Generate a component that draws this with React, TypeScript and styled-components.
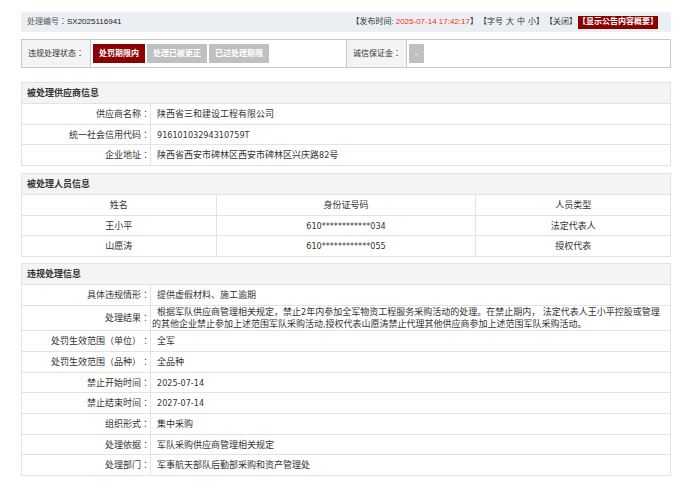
import React from "react";
import styled, { createGlobalStyle } from "styled-components";

const GlobalStyle = createGlobalStyle`
  * { box-sizing: border-box; }
  body {
    margin: 0;
    background: #fff;
    color: #333;
    font-family: "DejaVu Sans Condensed", "Noto Sans CJK SC", sans-serif;
    font-size: 9px;
    line-height: 12px;
    text-spacing-trim: space-all;
  }
`;

const Page = styled.main`
  padding: 12px 29px 10px 21px;
`;

const TopBar = styled.header`
  display: flex;
  align-items: center;
  justify-content: space-between;
  height: 20px;
  padding: 0 13px 0 6px;
  background: #ebeff3;
  color: #555;
  font-family: "Liberation Sans", "Noto Sans CJK SC", sans-serif;
  font-size: 8px;
  white-space: nowrap;
`;

const CaseNumber = styled.span`
  color: #222;
`;

const Tools = styled.div`
  display: flex;
  align-items: center;
  gap: 1px;
  color: #333;
`;

const PublishTime = styled.time`
  margin-left: 2px;
  color: #ff2a10;
`;

const TextButton = styled.button`
  border: 0;
  padding: 0;
  background: none;
  color: inherit;
  font: inherit;
  cursor: pointer;
`;

const SizeButton = styled(TextButton)`
  margin-left: 3px;
`;

const SummaryButton = styled(TextButton)`
  height: 13px;
  background: #8b0000;
  color: #fff;
  font-weight: bold;
`;

const StatusBar = styled.section`
  display: grid;
  grid-template-columns: 69px 257fr 60px 264fr;
  margin-top: 7px;
  border: 1px solid #c8c8c8;
  font-family: "Liberation Sans", "Noto Sans CJK SC", sans-serif;
  font-size: 8px;
  white-space: nowrap;
`;

const StatusLabel = styled.div`
  padding-left: 6px;
  border-right: 1px solid #c8c8c8;
  background: #f4f4f4;
  line-height: 27px;
`;

const StatusValues = styled.div<{ $divided?: boolean }>`
  display: flex;
  gap: 2px;
  padding: 4px 2px;
  border-right: ${(p) => (p.$divided ? "1px solid #c8c8c8" : "0")};
`;

const Tag = styled.span<{ $active?: boolean }>`
  height: 19px;
  padding: 0 6px;
  background: ${(p) => (p.$active ? "#8b0000" : "#c0c0c0")};
  color: #fff;
  font-weight: bold;
  line-height: 19px;
`;

const Table = styled.table<{ $top: number }>`
  width: 100%;
  margin-top: ${(p) => p.$top}px;
  border-collapse: collapse;
  table-layout: fixed;
`;

const Row = styled.tr`
  height: 21px;
  &:nth-child(3n) { height: 20px; }
`;

const SectionTitle = styled.th`
  padding: 0 5px;
  border: 1px solid #e3e3e3;
  background: #f4f4f4;
  text-align: left;
`;

const Label = styled.th`
  padding: 0;
  border: 1px solid #e3e3e3;
  font-weight: normal;
  text-align: right;
`;

const Value = styled.td`
  padding: 0 5px 0 1px;
  border: 1px solid #e3e3e3;
  text-indent: 5px;
`;

const ColumnHead = styled.th`
  padding: 0;
  border: 1px solid #e3e3e3;
  font-weight: normal;
`;

const Cell = styled.td`
  padding: 0;
  border: 1px solid #e3e3e3;
  text-align: center;
`;

const LabelCol = styled.col`
  width: 129px;
`;

const ShareCol = styled.col<{ $share: number }>`
  width: ${(p) => p.$share}%;
`;

/* Punctuation centred in its full-width box. */
const Mark = styled.span`
  font-family: "Noto Sans CJK TC", sans-serif;
  line-height: 1;
`;

const Colon = () => <Mark lang="zh-Hant">：</Mark>;

type Field = { label: string; value: string };

const supplier: Field[] = [
  { label: "供应商名称", value: "陕西省三和建设工程有限公司" },
  { label: "统一社会信用代码", value: "91610103294310759T" },
  { label: "企业地址", value: "陕西省西安市碑林区西安市碑林区兴庆路82号" },
];

const people = [
  ["王小平", "610************034", "法定代表人"],
  ["山愿涛", "610************055", "授权代表"],
];

const violation: Field[] = [
  { label: "具体违规情形", value: "提供虚假材料、施工逾期" },
  {
    label: "处理结果",
    value:
      "根据军队供应商管理相关规定，禁止2年内参加全军物资工程服务采购活动的处理。在禁止期内， 法定代表人王小平控股或管理的其他企业禁止参加上述范围军队采购活动,授权代表山愿涛禁止代理其他供应商参加上述范围军队采购活动。",
  },
  { label: "处罚生效范围（单位）", value: "全军" },
  { label: "处罚生效范围（品种）", value: "全品种" },
  { label: "禁止开始时间", value: "2025-07-14" },
  { label: "禁止结束时间", value: "2027-07-14" },
  { label: "组织形式", value: "集中采购" },
  { label: "处理依据", value: "军队采购供应商管理相关规定" },
  { label: "处理部门", value: "军事航天部队后勤部采购和资产管理处" },
];

function FieldTable({ title, fields, top }: { title: string; fields: Field[]; top: number }) {
  return (
    <Table $top={top}>
      <colgroup>
        <LabelCol />
        <col />
      </colgroup>
      <tbody>
        <Row>
          <SectionTitle colSpan={2}>{title}</SectionTitle>
        </Row>
        {fields.map((f) => (
          <Row key={f.label}>
            <Label scope="row">
              {f.label}
              <Colon />
            </Label>
            <Value>{f.value}</Value>
          </Row>
        ))}
      </tbody>
    </Table>
  );
}

export default function App() {
  return (
    <>
      <GlobalStyle />
      <Page lang="zh-CN">
        <TopBar>
          <div>
            处理编号
            <Colon />
            <CaseNumber>SX2025116941</CaseNumber>
          </div>
          <Tools>
            <span>
              【发布时间:<PublishTime>2025-07-14 17:42:17</PublishTime>】
            </span>
            <span>
              【字号<SizeButton>大</SizeButton>
              <SizeButton>中</SizeButton>
              <SizeButton>小</SizeButton>】
            </span>
            <TextButton>【关闭】</TextButton>
            <SummaryButton>【显示公告内容概要】</SummaryButton>
          </Tools>
        </TopBar>

        <StatusBar>
          <StatusLabel>
            违规处理状态
            <Colon />
          </StatusLabel>
          <StatusValues $divided>
            <Tag $active>处罚期限内</Tag>
            <Tag>处理已被更正</Tag>
            <Tag>已过处理期限</Tag>
          </StatusValues>
          <StatusLabel>
            诚信保证金
            <Colon />
          </StatusLabel>
          <StatusValues>
            <Tag>-</Tag>
          </StatusValues>
        </StatusBar>

        <FieldTable title="被处理供应商信息" fields={supplier} top={14} />

        <Table $top={7}>
          <colgroup>
            <ShareCol $share={30} />
            <ShareCol $share={40} />
            <ShareCol $share={30} />
          </colgroup>
          <tbody>
            <Row>
              <SectionTitle colSpan={3}>被处理人员信息</SectionTitle>
            </Row>
            <Row>
              <ColumnHead scope="col">姓名</ColumnHead>
              <ColumnHead scope="col">身份证号码</ColumnHead>
              <ColumnHead scope="col">人员类型</ColumnHead>
            </Row>
            {people.map((person) => (
              <Row key={person[0]}>
                {person.map((text) => (
                  <Cell key={text}>{text}</Cell>
                ))}
              </Row>
            ))}
          </tbody>
        </Table>

        <FieldTable title="违规处理信息" fields={violation} top={6} />
      </Page>
    </>
  );
}
